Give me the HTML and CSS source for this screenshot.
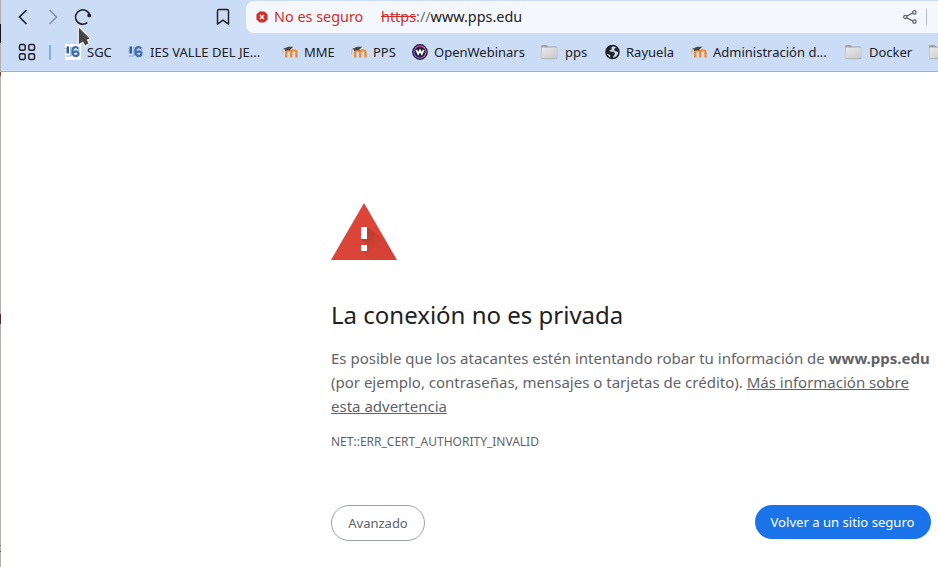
FILE: index.html
```html
<!DOCTYPE html>
<html lang="es">
<head>
<meta charset="utf-8">
<title>Error de privacidad</title>
<link rel="stylesheet" href="styles.css">
</head>
<body>
<svg class="defs" width="0" height="0" aria-hidden="true">
  <defs>
    <linearGradient id="paper" x1="0" y1="0" x2="1" y2="1"><stop offset="0" stop-color="#e9e9e9"/><stop offset="1" stop-color="#c9c9c9"/></linearGradient>
    <linearGradient id="ring" x1="0" y1="0.7" x2="1" y2="0.3"><stop offset="0" stop-color="#7b4fc4"/><stop offset="1" stop-color="#e8478b"/></linearGradient>
    <linearGradient id="shade" gradientUnits="userSpaceOnUse" x1="33" y1="33" x2="45" y2="45"><stop offset="0" stop-color="#000" stop-opacity=".14"/><stop offset="1" stop-color="#000" stop-opacity=".03"/></linearGradient>
    <symbol id="folder" viewBox="0 0 18 16">
      <path d="M1 13V2.500Q1 1 2.300 1H6.500L8 2.500H16Q17 2.500 17 3.500V13Z" fill="#a3a3a3"/>
      <path d="M1.500 3.500H17.500V13Q17.500 14.500 16 14.500H2.500Q1.200 14.500 1.200 13Z" fill="url(#paper)" stroke="#c4c4c4" stroke-width=".6"/>
      <path d="M1.500 14.600H17" stroke="#a9a9a9" stroke-width=".8"/>
    </symbol>
    <symbol id="moodle" viewBox="0 0 16 16">
      <path d="M4.200 13.500V8.700Q4.200 6.400 6.700 6.400T9.200 8.700V13.500M9.200 8.700Q9.200 6.400 11.900 6.400T14.500 8.700V13.500" fill="none" stroke="#f28c28" stroke-width="2.400"/>
      <path d="M.8 5.100 6.300 2.700 11.400 2.800 8.500 5.200 8.300 6.600Q5.600 5.700 3.200 7.200L3 5.500Z" fill="#464646"/>
      <path d="M1.100 5.200Q.5 8 .7 10.300" fill="none" stroke="#d6a68e" stroke-width=".8"/>
    </symbol>
    <symbol id="school" viewBox="0 0 16 16">
      <path d="M1.500 2.500H4V9.500H1.500Z" fill="#345d91"/>
      <path d="M0 4.500H2M0 8H2M.5 12H6" stroke="#91abd0" stroke-width="1.200"/>
      <path d="M6 3V12" stroke="#9bb6db" stroke-width="1.600"/>
      <path d="M13.300 4.600Q12.300 3.200 10.500 3.200 7.500 3.200 7.500 7.500T10.500 12Q13.500 12 13.500 9.700T10.700 7.500Q9 7.500 8 8.700" fill="none" stroke="#416fae" stroke-width="2.300"/>
      <path d="M13.700 3V8M8 6H11" stroke="#86a9d4" stroke-width="1.200"/>
    </symbol>
  </defs>
</svg>
<div class="window">
  <div class="edge"><i class="mark dark"></i><i class="mark brown"></i><i class="mark maroon"></i><i class="mark tan"></i><i class="mark plum"></i></div>
  <div class="browser">
    <header class="chrome">
      <div class="toolbar">
        <div class="nav">
          <svg width="18" height="18" viewBox="0 0 18 18"><path d="M12.500 2 5.500 9l7 7" fill="none" stroke="#202124" stroke-width="1.700"/></svg>
          <svg width="18" height="18" viewBox="0 0 18 18"><path d="m5.500 2 7 7-7 7" fill="none" stroke="#8a93a5" stroke-width="1.700"/></svg>
          <svg width="18" height="18" viewBox="0 0 18 18"><path d="M13.300 14.600A7.200 7.200 0 1 1 15.700 7.200" fill="none" stroke="#202124" stroke-width="1.600"/><circle cx="15.200" cy="7.400" r="1.900" fill="#202124"/></svg>
        </div>
        <svg class="save" width="14" height="18" viewBox="0 0 14 18"><path d="M1.500 16.200V3Q1.500 1.500 3 1.500H11Q12.500 1.500 12.500 3V16.200L7 12.200Z" fill="none" stroke="#202124" stroke-width="1.500" stroke-linejoin="round"/></svg>
        <div class="address">
          <svg width="12" height="12" viewBox="0 0 12 12"><path d="M3.600.4H8.400L11.600 3.600V8.400L8.400 11.600H3.600L.4 8.400V3.600Z" fill="#cf2e2a"/><path d="m4 4 4 4M8 4 4 8" stroke="#fff" stroke-width="1.400"/></svg>
          <span class="status">No es seguro</span>
          <span class="url"><s>https</s><span class="sep">://</span>www.pps.edu</span>
          <svg class="share" width="14" height="14" viewBox="0 0 14 14" fill="none" stroke="#5f6368" stroke-width="1.300"><path d="m3.800 6 5.900-2.900M3.800 8l5.900 2.900"/><circle cx="2.300" cy="7" r="1.600"/><circle cx="11.400" cy="2.400" r="1.700"/><circle cx="11.400" cy="11.600" r="1.700"/></svg>
          <span class="rule"></span>
        </div>
      </div>
      <nav class="bookmarks">
        <svg class="apps" width="18" height="18" viewBox="0 0 18 18" fill="none" stroke="#202124" stroke-width="1.500"><rect x="1.500" y="1.500" width="5.700" height="5.700" rx="1.500"/><rect x="10.800" y="1.500" width="5.700" height="5.700" rx="1.500"/><rect x="1.500" y="10.800" width="5.700" height="5.700" rx="1.500"/><rect x="10.800" y="10.800" width="5.700" height="5.700" rx="1.500"/></svg>
        <span class="divider"></span>
        <div class="links">
          <a><svg class="white" width="16" height="16"><use href="#school"/></svg>SGC</a>
          <a><svg width="16" height="16"><use href="#school"/></svg>IES VALLE DEL JE...</a>
          <a><svg width="16" height="16"><use href="#moodle"/></svg>MME</a>
          <a><svg width="16" height="16"><use href="#moodle"/></svg>PPS</a>
          <a><svg width="16" height="16" viewBox="0 0 16 16"><circle cx="8" cy="8" r="7.200" fill="#1b2238" stroke="#1b2238" stroke-width="1.400"/><circle cx="8" cy="8" r="6" fill="none" stroke="url(#ring)" stroke-width="1.300"/><path d="m4.300 5.800 1.900 4L8 6.300l1.800 3.500 1.900-4" fill="none" stroke="#fff" stroke-width="1.700"/></svg>OpenWebinars</a>
          <a class="dir"><svg width="18" height="16"><use href="#folder"/></svg>pps</a>
          <a><svg width="15" height="16" viewBox="0 0 15 16"><circle cx="7.500" cy="8" r="6.500" fill="none" stroke="#202124" stroke-width="1.600"/><path d="M1 6.700 3 3.500 6 1.600 9 1.600 6.300 3.600 7 5.200 4.500 6.300 5.200 7.500 8.800 7.800 10.200 9.800 8.500 12 7.600 14.500 5.400 14 5.200 11.100 1.600 9.500ZM9.500 4.500 12 3.200 14 7 12.500 8 9.300 6.500Z" fill="#202124"/></svg>Rayuela</a>
          <a><svg width="16" height="16"><use href="#moodle"/></svg>Administración d...</a>
          <a class="dir"><svg width="18" height="16"><use href="#folder"/></svg>Docker</a>
          <a class="dir"><svg width="18" height="16"><use href="#folder"/></svg></a>
        </div>
      </nav>
    </header>
    <main>
      <svg class="warning" width="66" height="57" viewBox="0 0 66 57"><path d="M33 0 66 57H0Z" fill="#db4437"/><path d="M36 24 55.500 39 66 57H39L30 48 36 48 36 42 30 36H36Z" fill="url(#shade)"/><path d="M30 24h6v12h-6zM30 42h6v6h-6z" fill="#fff"/></svg>
      <h1>La conexión no es privada</h1>
      <p>Es posible que los atacantes estén intentando robar tu información de <strong>www.pps.edu</strong> (por ejemplo, contraseñas, mensajes o tarjetas de crédito). <a class="more">Más información sobre esta advertencia</a></p>
      <div class="code">NET::ERR_CERT_AUTHORITY_INVALID</div>
      <div class="actions"><button class="secondary">Avanzado</button><button class="primary">Volver a un sitio seguro</button></div>
    </main>
  </div>
</div>
<svg class="pointer" width="16" height="24" viewBox="0 0 16 24"><path d="M1.300 1.300 13.600 13.500 10.500 15 12.300 18.500 8 21.300 5.800 17.300 1.300 20Z" fill="#454545" stroke="#f4f4f4" stroke-width="1.100"/></svg>
</body>
</html>
```

FILE: styles.css
```css
* { box-sizing: border-box; }
body { margin: 0; overflow: hidden; background: #fff; font-family: "Noto Sans", sans-serif; }
svg { display: block; flex: none; }
.defs, .pointer { position: absolute; }
.pointer { left: 77px; top: 25px; }
.window { display: flex; height: 567px; }
.edge { flex: 0 0 1px; background: #b3b0af; }
.mark { display: block; }
.dark { margin-top: 24px; height: 19px; background: #17151c; }
.brown { margin-top: 29px; height: 4px; background: #854b2c; }
.maroon { margin-top: 238px; height: 10px; background: #532b30; }
.tan { margin-top: 221px; height: 1px; background: #a66d43; }
.plum { margin-top: 5px; height: 1px; background: #6c464c; }
.browser { flex: 1; min-width: 0; }
.chrome { height: 72px; background: #cbdcf6; border-bottom: 1px solid #a2b0c8; color: #202124; }
.toolbar { display: flex; align-items: center; height: 33px; padding-top: 1px; }
.nav { display: flex; gap: 12px; margin-left: 13px; }
.save { margin-left: 124px; }
.address { flex: 1; align-self: stretch; display: flex; align-items: center; margin-left: 16px; padding-left: 10px; border-radius: 8px 0 0 8px; background: #f4f8fd; font-size: 14.400px; line-height: 19px; white-space: nowrap; }
.status { width: 107px; margin-left: 6px; padding-bottom: 1px; color: #cf2e2a; }
.url { padding-bottom: 1px; }
.url s { color: #cf2e2a; }
.sep { color: #6b7078; }
.share { margin-left: auto; }
.rule { width: 1px; height: 16px; margin: 0 11px 0 9px; background: #b7babe; }
.bookmarks { display: flex; align-items: center; height: 38px; padding-left: 17px; overflow: hidden; }
.divider { flex: none; width: 2px; height: 15px; margin: 0 14px 0 13px; border-radius: 1px; background: #83abe8; }
.links { flex: none; display: grid; grid-template-columns: 63px 154px 69px 61px 129px 64px 86px 154px 84px 18px; font-size: 13px; line-height: 18px; white-space: nowrap; }
.links a { display: flex; align-items: center; gap: 6px; }
.links .dir { margin-left: -1px; gap: 7px; }
.white { background: #fff; }
main { width: 600px; margin: 131px 0 0 330px; font-size: 15px; line-height: 24px; color: #5f6368; }
h1 { margin: 40px 0 16px; font-size: 24px; font-weight: 400; line-height: 30px; color: #202124; }
p { margin: 0; }
.more { color: #5f6368; text-decoration: underline; }
.code { margin-top: 15px; font-size: 12px; line-height: 18px; }
.actions { display: flex; justify-content: space-between; align-items: flex-start; margin-top: 54px; }
button { font: 13px/18px "Noto Sans", sans-serif; border-radius: 18px; padding: 0 16px; white-space: nowrap; }
.secondary { width: 94px; height: 36px; border: 1px solid #9aa0a6; background: #fff; color: #5f6368; }
.primary { width: 176px; height: 34px; padding: 0 16px 0 15px; border: 0; background: #1a73e8; color: #fff; font-size: 13.100px; }
```
